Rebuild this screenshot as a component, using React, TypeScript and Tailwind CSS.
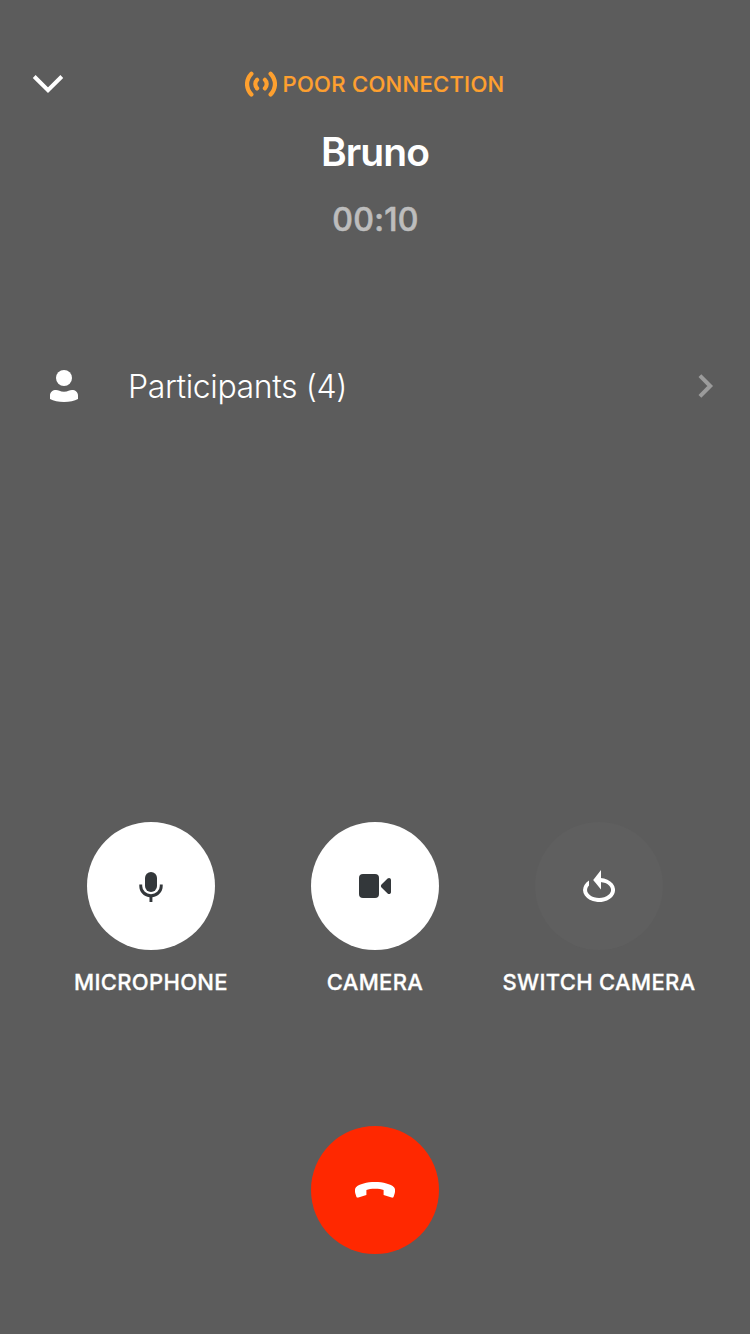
import type { ReactNode } from 'react';

function ChevronDown() {
  return (
    <svg width="32" height="32" viewBox="0 0 32 32" fill="none" stroke="#fff" strokeWidth="4">
      <path d="M2.200 8.500 16 22.200 29.800 8.500" />
    </svg>
  );
}

function ChevronRight() {
  return (
    <svg width="32" height="32" viewBox="0 0 32 32" fill="none" stroke="#9b9b9b" strokeWidth="4">
      <path d="M10.900 5.700 21.200 16 10.900 26.300" />
    </svg>
  );
}

function SignalIcon() {
  return (
    <svg width="32" height="28" viewBox="0 0 32 28" fill="none" stroke="#fea02f" strokeWidth="4.200" strokeLinecap="round">
      <path d="M6.400 3.700C.6 9.800.6 18.400 6.400 24.500M25.600 3.700c5.800 6.100 5.800 14.700 0 20.800" />
      <path d="M12.100 9.800c-2.400 2.200-2.400 6.400 0 8.600M19.900 9.800c2.400 2.200 2.400 6.400 0 8.600" />
    </svg>
  );
}

function PersonIcon() {
  return (
    <svg width="28" height="32" viewBox="0 0 28 32" fill="#fff">
      <circle cx="14" cy="8" r="8" />
      <path d="M0 25.500C0 22 2.800 20 6 20c2.500 0 4 1.700 8 1.700S19.500 20 22 20c3.200 0 6 2 6 5.500V29c-3.500 2-8.500 3-14 3S3.500 31 0 29Z" />
    </svg>
  );
}

function MicIcon() {
  return (
    <svg width="32" height="32" viewBox="0 0 32 32" fill="#33373a">
      <rect x="10" y="2" width="12" height="20" rx="6" />
      <path d="M4.300 14.400h2.900v1.600a8.800 8.300 0 0 0 17.600 0v-1.600h2.900V16c0 6-4.400 10.500-10.300 11.200V32h-2.900v-4.800C8.700 26.500 4.300 22 4.300 16Z" />
    </svg>
  );
}

function CameraIcon() {
  return (
    <svg width="32" height="24" viewBox="0 0 32 24" fill="#33373a">
      <rect width="20" height="24" rx="4" />
      <path d="m22.500 10.600 6.100-6.100c1.300-1.100 3.400-.5 3.400 1.500v12c0 2-2.100 2.600-3.400 1.500l-6.100-6.100c-.8-.8-.8-2 0-2.800Z" />
    </svg>
  );
}

function SwitchIcon() {
  return (
    <svg width="32" height="32" viewBox="0 0 32 32" fill="#fff">
      <path d="M6 10.600A16 12 0 1 0 17.500 8V12A12 8 0 1 1 6 15.600Z" />
      <path d="M18 0v19.500L10.200 10Z" />
    </svg>
  );
}

function HangUpIcon() {
  return (
    <svg width="40" height="16" viewBox="0 0 40 16" fill="#fff">
      <path d="M20 0C28 0 36 2 39 5.300c1.500 1.800 1.200 4.200.5 6.700l-.8 2.500c-.3 1-1.200 1.400-2.100 1.100l-8-2.700V8c-2-.9-5-1.300-8.600-1.300s-6.600.4-8.600 1.300v4.900l-8 2.700c-.9.300-1.800-.1-2.100-1.100L.5 12C-.2 9.500-.5 7.100 1 5.300 4 2 12 0 20 0Z" />
    </svg>
  );
}

function CallControl({ label, dim = false, children }: { label: string; dim?: boolean; children: ReactNode }) {
  return (
    <div className="flex w-56 flex-col items-center">
      <button
        aria-label={label}
        className={`flex size-32 items-center justify-center rounded-full ${dim ? 'bg-[#5f5f5f]' : 'bg-white'}`}
      >
        {children}
      </button>
      <span className="mt-[18px] text-[22px] leading-7 font-medium tracking-[0.32px] whitespace-nowrap text-white [-webkit-text-stroke:0.3px_white]">
        {label}
      </span>
    </div>
  );
}

export default function App() {
  return (
    <main className="flex h-[1334px] w-[750px] flex-col bg-[#5c5c5c] font-['Inter','Liberation_Sans',sans-serif]">
      <header className="grid grid-cols-[64px_1fr_64px] pt-17">
        <button aria-label="Minimize" className="flex h-8 items-center justify-end">
          <ChevronDown />
        </button>
        <div className="flex flex-col items-center">
          <div className="flex h-8 items-center gap-[5px] text-[22px] font-medium tracking-[0.3px] text-[#fea02f]">
            <SignalIcon />
            <span className="[-webkit-text-stroke:0.2px_#fea02f]">POOR CONNECTION</span>
          </div>
          <h1 className="mt-7 text-[39px] leading-12 font-semibold tracking-[-0.9px] text-white">Bruno</h1>
          <p className="mt-[24px] pl-[1px] text-[32px] leading-10 font-medium tracking-[0.3px] text-[#bdbdbd] [-webkit-text-stroke:0.6px_#bdbdbd]">00:10</p>
        </div>
      </header>

      <button className="mt-[114px] flex h-16 items-center pr-[29px] pl-[50px] text-left">
        <PersonIcon />
        <span className="ml-[50px] flex-1 pt-px text-[32px] leading-10 font-light tracking-[-0.38px] text-white">Participants (4)</span>
        <ChevronRight />
      </button>

      <section className="mt-[404px] flex justify-center">
        <CallControl label="MICROPHONE">
          <MicIcon />
        </CallControl>
        <CallControl label="CAMERA">
          <CameraIcon />
        </CallControl>
        <CallControl label="SWITCH CAMERA" dim>
          <SwitchIcon />
        </CallControl>
      </section>

      <button aria-label="End call" className="mt-[130px] flex size-32 items-center justify-center self-center rounded-full bg-[#ff2800]">
        <HangUpIcon />
      </button>
    </main>
  );
}
